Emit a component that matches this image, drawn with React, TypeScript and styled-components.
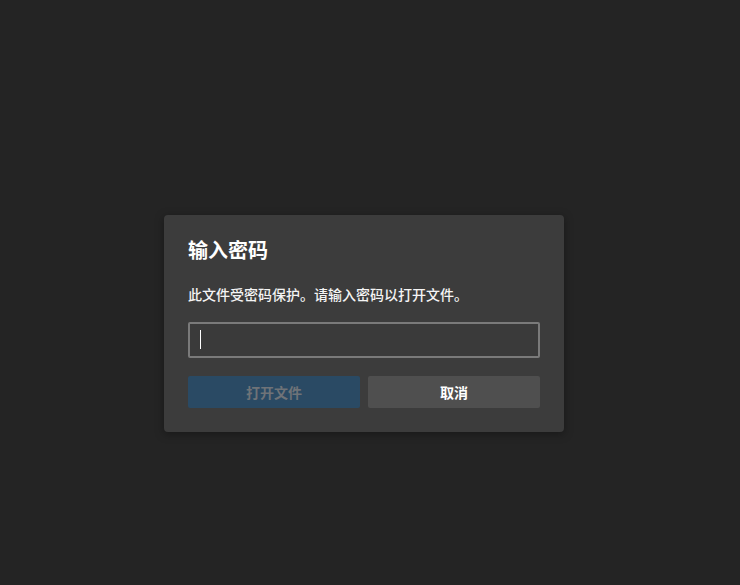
import React from "react";
import styled, { createGlobalStyle } from "styled-components";

const Global = createGlobalStyle`
  html, body { margin: 0; padding: 0; background: #242424; }
  body { font-family: "Noto Sans CJK SC", "Noto Sans", "Liberation Sans", sans-serif; }
  * { box-sizing: border-box; }
`;

const Page = styled.div`
  min-height: 585px;
  display: flex;
  justify-content: center;
  align-items: flex-start;
  padding: 215px 12px 0 0;
`;

const Dialog = styled.div`
  width: 400px;
  background: #3c3c3c;
  border-radius: 4px;
  box-shadow: 0 2px 10px rgba(0, 0, 0, 0.35);
  padding: 23px 24px 24px;
  display: flex;
  flex-direction: column;
`;

const Title = styled.h2`
  margin: 0;
  font-size: 20px;
  line-height: 24px;
  font-weight: 700;
  color: #ffffff;
`;

const Desc = styled.p`
  margin: 22px 0 0;
  font-size: 14px;
  line-height: 20px;
  font-weight: 500;
  color: #f4f4f4;
`;

const Field = styled.div`
  position: relative;
  margin-top: 18px;
`;

const Input = styled.input`
  display: block;
  height: 36px;
  width: 100%;
  background: #3a3a3a;
  border: 2px solid #7a7a7a;
  border-radius: 2px;
  outline: none;
  padding: 0 10px;
  color: #ffffff;
  caret-color: transparent;
  font-size: 14px;
  font-family: inherit;
`;

const Caret = styled.span`
  position: absolute;
  left: 12px;
  top: 8px;
  width: 1px;
  height: 19px;
  background: #ffffff;
  pointer-events: none;
`;

const Actions = styled.div`
  margin-top: 18px;
  display: grid;
  grid-template-columns: 1fr 1fr;
  gap: 8px;
`;

const Button = styled.button<{ $primary?: boolean }>`
  height: 32px;
  border: none;
  border-radius: 2px;
  font-family: inherit;
  font-size: 14px;
  font-weight: 700;
  background: ${(p) => (p.$primary ? "#2a4a64" : "#4f4f4f")};
  color: ${(p) => (p.$primary ? "#6f7378" : "#ffffff")};
  cursor: ${(p) => (p.$primary ? "default" : "pointer")};
`;

export default function App() {
  return (
    <>
      <Global />
      <Page>
        <Dialog>
          <Title>输入密码</Title>
          <Desc>此文件受密码保护。请输入密码以打开文件。</Desc>
          <Field>
            <Input type="password" autoFocus />
            <Caret />
          </Field>
          <Actions>
            <Button $primary disabled>打开文件</Button>
            <Button>取消</Button>
          </Actions>
        </Dialog>
      </Page>
    </>
  );
}
